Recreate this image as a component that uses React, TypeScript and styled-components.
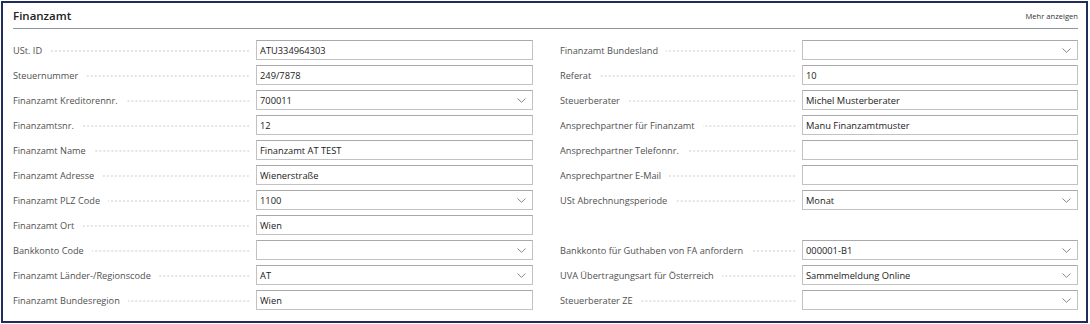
import React from 'react'
import styled, { createGlobalStyle } from 'styled-components'

const GlobalStyle = createGlobalStyle`
    html, body {
        margin: 0;
        padding: 0;
        background: #ffffff;
    }
    body {
        font-family: "Open Sans", "Noto Sans", "Liberation Sans", sans-serif;
    }
`

const Frame = styled.div`
    box-sizing: border-box;
    margin: 1px 0 0 1px;
    width: 1087px;
    height: 322px;
    border: 2px solid #1f2c5c;
    padding: 0 8px 0 10px;
    background: #ffffff;
`

const Header = styled.div`
    display: flex;
    align-items: flex-end;
    justify-content: space-between;
    height: 26px;
    border-bottom: 1px solid #8f959c;
    box-sizing: border-box;
    padding-bottom: 4px;
`

const Title = styled.div`
    font-size: 11.5px;
    font-weight: 600;
    color: #212121;
    line-height: 16px;
`

const MoreLink = styled.div`
    font-size: 7.6px;
    color: #333333;
    line-height: 12px;
    padding-bottom: 2px;
`

const Columns = styled.div`
    display: grid;
    grid-template-columns: 520px 518px;
    column-gap: 27px;
    padding-top: 11px;
`

const Column = styled.div`
    display: flex;
    flex-direction: column;
`

const Row = styled.div`
    display: grid;
    grid-template-columns: ${({ $labelWidth }: { $labelWidth: number }) => `${$labelWidth}px`} 1fr;
    height: 25px;
`

const LabelCell = styled.div`
    display: flex;
    align-items: center;
    height: 20px;
    padding-right: 6px;
    overflow: hidden;
`

const LabelText = styled.span`
    font-size: 9.2px;
    color: #505050;
    white-space: nowrap;
    padding-right: 8px;
`

const Leader = styled.span`
    flex: 1;
    height: 2px;
    margin-top: 2px;
    background-image: radial-gradient(circle, #d2d2d2 0.55px, transparent 0.9px);
    background-size: 4px 2px;
    background-repeat: repeat-x;
    background-position: right center;
`

const Field = styled.div`
    box-sizing: border-box;
    display: flex;
    align-items: center;
    justify-content: space-between;
    height: 20px;
    border: 1px solid #c2c2c2;
    border-top-color: #a9a9a9;
    padding: 0 6px 0 3px;
    font-size: 9.3px;
    color: #1a1a1a;
    background: #ffffff;
    white-space: nowrap;
`

const Chevron = () => (
    <svg width="9" height="5" viewBox="0 0 9 5" style={{ flexShrink: 0 }}>
        <path d="M0.5 0.5 L4.5 4.3 L8.5 0.5" fill="none" stroke="#7a7a7a" strokeWidth="0.9" />
    </svg>
)

interface FieldDef {
    label?: string;
    value?: string;
    select?: boolean;
}

const leftFields: FieldDef[] = [
    { label: 'USt. ID', value: 'ATU334964303' },
    { label: 'Steuernummer', value: '249/7878' },
    { label: 'Finanzamt Kreditorennr.', value: '700011', select: true },
    { label: 'Finanzamtsnr.', value: '12' },
    { label: 'Finanzamt Name', value: 'Finanzamt AT TEST' },
    { label: 'Finanzamt Adresse', value: 'Wienerstraße' },
    { label: 'Finanzamt PLZ Code', value: '1100', select: true },
    { label: 'Finanzamt Ort', value: 'Wien' },
    { label: 'Bankkonto Code', value: '', select: true },
    { label: 'Finanzamt Länder-/Regionscode', value: 'AT', select: true },
    { label: 'Finanzamt Bundesregion', value: 'Wien' },
]

const rightFields: FieldDef[] = [
    { label: 'Finanzamt Bundesland', value: '', select: true },
    { label: 'Referat', value: '10' },
    { label: 'Steuerberater', value: 'Michel Musterberater' },
    { label: 'Ansprechpartner für Finanzamt', value: 'Manu Finanzamtmuster' },
    { label: 'Ansprechpartner Telefonnr.', value: '' },
    { label: 'Ansprechpartner E-Mail', value: '' },
    { label: 'USt Abrechnungsperiode', value: 'Monat', select: true },
    {},
    { label: 'Bankkonto für Guthaben von FA anfordern', value: '000001-B1', select: true },
    { label: 'UVA Übertragungsart für Österreich', value: 'Sammelmeldung Online', select: true },
    { label: 'Steuerberater ZE', value: '', select: true },
]

const FieldRow = ({ field, labelWidth }: { field: FieldDef; labelWidth: number }) => {
    if (!field.label) {
        return <Row $labelWidth={labelWidth} />
    }
    return (
        <Row $labelWidth={labelWidth}>
            <LabelCell>
                <LabelText>{field.label}</LabelText>
                <Leader />
            </LabelCell>
            <Field>
                <span>{field.value}</span>
                {field.select && <Chevron />}
            </Field>
        </Row>
    )
}

const App: React.FC = () => {
    return (
        <>
            <GlobalStyle />
            <Frame>
                <Header>
                    <Title>Finanzamt</Title>
                    <MoreLink>Mehr anzeigen</MoreLink>
                </Header>
                <Columns>
                    <Column>
                        {leftFields.map((f, i) => (
                            <FieldRow key={i} field={f} labelWidth={243} />
                        ))}
                    </Column>
                    <Column>
                        {rightFields.map((f, i) => (
                            <FieldRow key={i} field={f} labelWidth={242} />
                        ))}
                    </Column>
                </Columns>
            </Frame>
        </>
    )
}

export default App
